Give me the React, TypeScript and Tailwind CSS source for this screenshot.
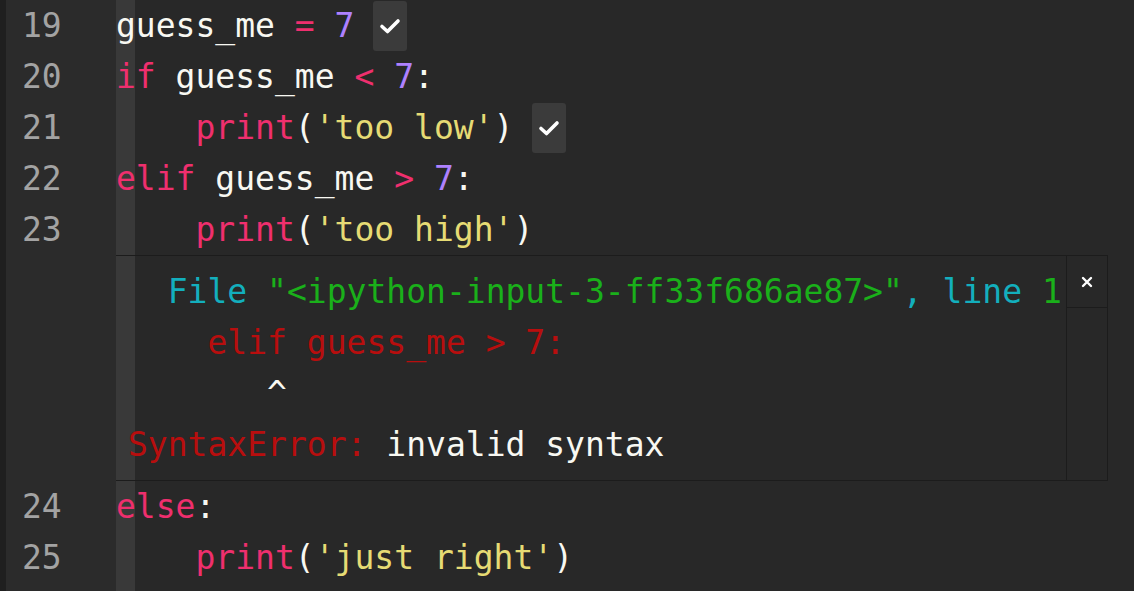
import React from "react";

type Tok = [string, string];

const W = "text-[#f8f8f2]";
const K = "text-[#ef2f6e]";
const N = "text-[#ae81ff]";
const S = "text-[#e6db74]";

const lines: { n: number; toks: Tok[]; check?: boolean }[] = [
  { n: 19, toks: [["guess_me ", W], ["=", K], [" ", W], ["7", N]], check: true },
  { n: 20, toks: [["if", K], [" guess_me ", W], ["<", K], [" ", W], ["7", N], [":", W]] },
  { n: 21, toks: [["    ", W], ["print", K], ["(", W], ["'too low'", S], [")", W]], check: true },
  { n: 22, toks: [["elif", K], [" guess_me ", W], [">", K], [" ", W], ["7", N], [":", W]] },
  { n: 23, toks: [["    ", W], ["print", K], ["(", W], ["'too high'", S], [")", W]] },
];

const tail: { n: number; toks: Tok[] }[] = [
  { n: 24, toks: [["else", K], [":", W]] },
  { n: 25, toks: [["    ", W], ["print", K], ["(", W], ["'just right'", S], [")", W]] },
];

const CY = "text-[#13afbd]";
const GR = "text-[#1ab01a]";
const RD = "text-[#b80e0e]";

const output: Tok[][] = [
  [["  ", W], ["File ", CY], ['"<ipython-input-3-ff33f686ae87>"', GR], [", ", CY], ["line ", CY], ["1", GR]],
  [["    ", W], ["elif guess_me > 7:", RD]],
  [["       ^", W]],
  [["SyntaxError:", RD], [" invalid syntax", W]],
];

function Check() {
  return (
    <span className="inline-flex items-center justify-center w-[34px] h-[50px] ml-[19px] rounded-[3px] bg-[#3b3b3b] align-middle">
      <svg width="22" height="18" viewBox="0 0 22 18" fill="none">
        <path d="M3 9.5 L8.5 14.5 L19 4" stroke="#ffffff" strokeWidth="3.6" strokeLinecap="round" strokeLinejoin="round" />
      </svg>
    </span>
  );
}

function Gutter({ n }: { n?: number }) {
  return (
    <div className="w-[110px] shrink-0 bg-[#2b2b2b] pl-[16px] text-[#a3a3a3]">
      {n}
    </div>
  );
}

const guide = "bg-[linear-gradient(to_right,#393939_19px,transparent_19px)]";

function CodeRow({ n, toks, check }: { n: number; toks: Tok[]; check?: boolean }) {
  return (
    <div className="flex h-[51px] items-center">
      <Gutter n={n} />
      <div className={`flex-1 h-full flex items-center whitespace-pre ${guide}`}>
        {toks.map(([t, c], i) => (
          <span key={i} className={c}>
            {t}
          </span>
        ))}
        {check && <Check />}
      </div>
    </div>
  );
}

export default function App() {
  return (
    <div
      className="w-[1134px] h-[591px] overflow-hidden flex bg-[#282828] text-[33px] leading-[51px]"
      style={{ fontFamily: '"DejaVu Sans Mono", "Liberation Mono", monospace' }}
    >
      <div className="w-[6px] shrink-0 bg-[#1f1f1f]" />
      <div className="flex-1 flex flex-col">
        {lines.map((l) => (
          <CodeRow key={l.n} {...l} />
        ))}
        <div className="flex h-[226px]">
          <Gutter />
          <div className={`flex-1 ${guide}`}>
            <div className="w-[992px] h-full flex border-t border-b border-r border-[#1c1c1c]">
              <div className="flex-1 pl-[12px] pt-[10px] whitespace-pre">
                {output.map((row, i) => (
                  <div key={i} className="h-[51px] flex items-center">
                    {row.map(([t, c], j) => (
                      <span key={j} className={c}>
                        {t}
                      </span>
                    ))}
                  </div>
                ))}
              </div>
              <div className="w-[41px] border-l border-[#1c1c1c] flex flex-col">
                <div className="h-[52px] border-b border-[#1c1c1c] flex items-center justify-center">
                  <svg width="12" height="12" viewBox="0 0 12 12">
                    <path d="M2 2 L10 10 M10 2 L2 10" stroke="#ffffff" strokeWidth="2.4" strokeLinecap="round" />
                  </svg>
                </div>
              </div>
            </div>
          </div>
        </div>
        {tail.map((l) => (
          <CodeRow key={l.n} {...l} />
        ))}
        <div className="flex flex-1">
          <Gutter />
          <div className={`flex-1 ${guide}`} />
        </div>
      </div>
    </div>
  );
}
